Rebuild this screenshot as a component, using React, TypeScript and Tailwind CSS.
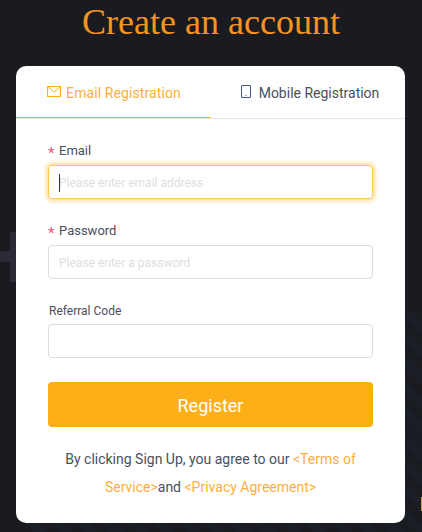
import React from 'react';

const font = "font-['Roboto',sans-serif]";

const Field: React.FC<{
  label: string;
  required?: boolean;
  placeholder?: string;
  focused?: boolean;
}> = ({ label, required, placeholder, focused }) => (
  <div className={required ? 'mb-[22px]' : 'mb-[24px]'}>
    <div className={required ? 'h-5 mb-1 flex items-center text-[13px] text-[#4a4f5e]' : 'h-5 mb-[3px] flex items-center text-[12px] text-[#4a4f5e]'}>
      {required && <span className="w-[11px] text-[#f0506e] text-[15px] leading-5 pt-[3px]">*</span>}
      <span className={required ? '' : 'ml-px'}>{label}</span>
    </div>
    <div
      className={
        focused
          ? 'relative h-[34px] rounded border border-[#fdc75a] shadow-[0_0_4px_2px_#ffdc94] flex items-center px-[10px] pt-[2px] text-[12px] text-[#dedede]'
          : 'h-[34px] rounded border border-[#dcdcdc] flex items-center px-[10px] pt-[2px] text-[12px] text-[#dedede]'
      }
    >
      {focused && <span className="absolute left-[10px] top-[8px] w-px h-[18px] bg-[#333]" />}
      {placeholder}
    </div>
  </div>
);

export default function App() {
  return (
    <div className={`h-[532px] w-[422px] overflow-hidden bg-[#191b20] relative ${font}`}>
      {/* background decoration */}
      <div className="absolute right-0 bottom-0 w-[400px] h-[220px] bg-[repeating-linear-gradient(45deg,#191b20_0px,#191b20_9px,#1a1e27_9px,#1a1e27_18px)]" />
      <div className="absolute left-[10px] top-[232px] w-[6px] h-[50px] bg-[#2a2b36]" />
      <div className="absolute left-0 top-[251px] w-[16px] h-[11px] bg-[#2a2b36]" />
      <div className="absolute right-0 top-[497px] w-px h-[14px] bg-[#d9a521]" />

      <h1 className="relative h-[66px] text-center text-[36px] leading-[44px] text-[#f7931e] font-['Liberation_Serif',serif]">
        Create an account
      </h1>
      <div className="relative mx-4 w-[389px] h-[457px] bg-white rounded-[10px]">
        <div className="flex h-[53px] text-[14px] border-b border-[#e5e5e5]">
          <div className="w-[195px] h-[52px] pt-[3px] pl-[1px] flex items-center justify-center border-b border-[#fdaf17] text-[#fdaf3a] gap-[5px] tracking-[0.1px]">
            <svg width="14" height="11" viewBox="0 0 14 11" fill="none" stroke="#fdaf17" strokeWidth="1" className="-mt-[4px]">
              <rect x="0.5" y="0.5" width="13" height="10" />
              <path d="M0.5 0.5 L7 6 L13.5 0.5" />
            </svg>
            <span>Email Registration</span>
          </div>
          <div className="flex-1 pt-[3px] pl-[4px] flex items-center justify-center text-[#4a4f5e] gap-2">
            <svg width="10" height="13" viewBox="0 0 10 13" fill="none" stroke="#3f5688" strokeWidth="1" className="-mt-[5px]">
              <rect x="0.5" y="0.5" width="9" height="12" rx="0.5" />
              <path d="M4.5 10.5 h1" />
            </svg>
            <span>Mobile Registration</span>
          </div>
        </div>
        <div className="px-8 pt-[22px]">
          <Field label="Email" required placeholder="Please enter email address" focused />
          <Field label="Password" required placeholder="Please enter a password" />
          <Field label="Referral Code" />
          <button className="block w-full h-[45px] pt-[2px] rounded bg-[#fdaf17] text-white text-[18px]">Register</button>
          <div className="mt-[18px] -mx-2 text-center text-[14px] leading-[28px] text-[#4a4f5e]">
            <div>
              By clicking Sign Up, you agree to our <span className="text-[#fdaf3a]">&lt;Terms of</span>
            </div>
            <div>
              <span className="text-[#fdaf3a]">Service&gt;</span>and <span className="text-[#fdaf3a]">&lt;Privacy Agreement&gt;</span>
            </div>
          </div>
        </div>
      </div>
    </div>
  );
}
